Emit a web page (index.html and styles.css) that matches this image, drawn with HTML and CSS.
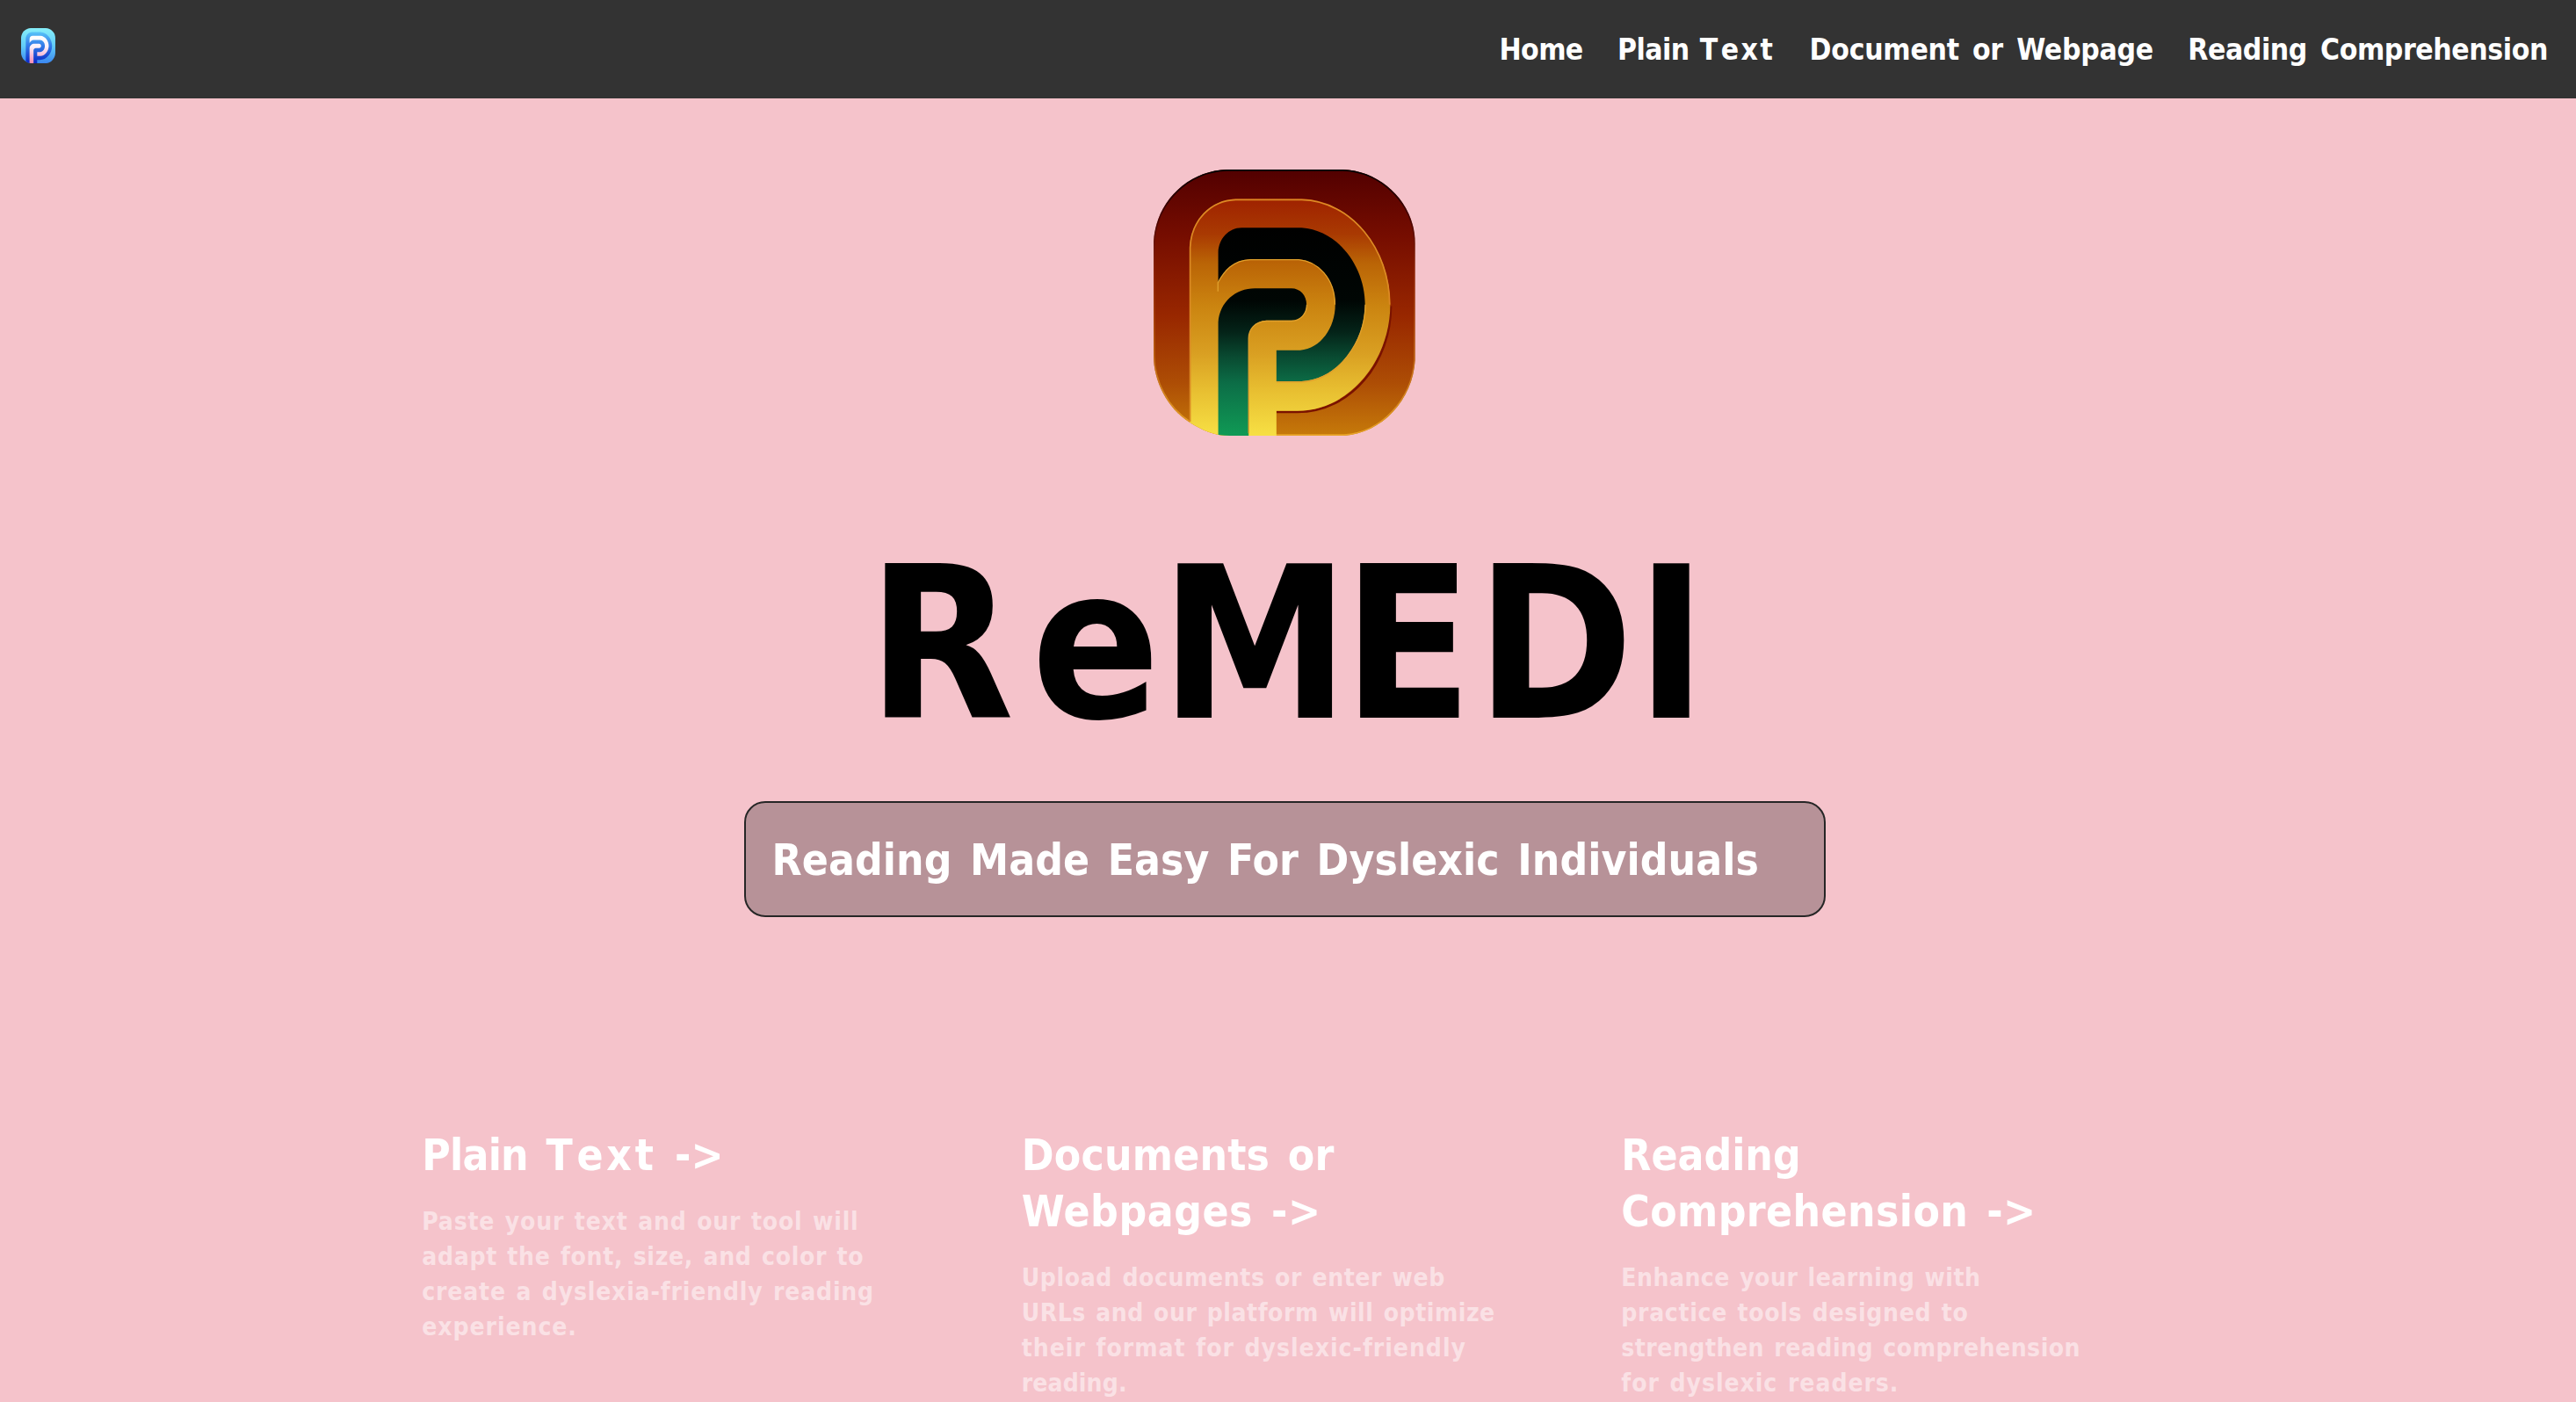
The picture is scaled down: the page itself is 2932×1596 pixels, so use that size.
FILE: index.html
```html
<!DOCTYPE html>
<html lang="en">
<head>
<meta charset="utf-8">
<title>ReMEDI</title>
<link rel="stylesheet" href="styles.css">
</head>
<body>
<header class="navbar">
  <svg class="brand" viewBox="69 68 895 910" preserveAspectRatio="none" aria-label="ReMEDI">
    <defs>
      <linearGradient id="sBase" gradientUnits="userSpaceOnUse" x1="0" y1="68" x2="0" y2="978"><stop offset="0" stop-color="#86eefa"/><stop offset=".5" stop-color="#62cdf8"/><stop offset="1" stop-color="#3a86f0"/></linearGradient>
      <linearGradient id="sBand" gradientUnits="userSpaceOnUse" x1="0" y1="168" x2="0" y2="978"><stop offset="0" stop-color="#58c4f8"/><stop offset=".4" stop-color="#3580ea"/><stop offset="1" stop-color="#0a28c4"/></linearGradient>
      <linearGradient id="sCore" gradientUnits="userSpaceOnUse" x1="0" y1="267" x2="0" y2="978"><stop offset="0" stop-color="#fff"/><stop offset=".4" stop-color="#fbf0fa"/><stop offset="1" stop-color="#f58cb4"/></linearGradient>
    </defs>
    <use href="#tile" fill="url(#sBase)"/>
    <g clip-path="url(#tileClip)"><use href="#band" fill="url(#sBand)"/></g>
    <g fill="url(#sCore)"><use href="#bowl"/><use href="#stem" clip-path="url(#tileClip)"/></g>
  </svg>
  <nav class="links">
    <a>Home</a><a><span class="word-plain">Plain</span> <span class="word-text"><span class="cap-t">T</span>ext</span></a><a>Document or Webpage</a><a>Reading Comprehension</a>
  </nav>
</header>
<main class="page">
  <svg class="logo" viewBox="69 68 895 910" preserveAspectRatio="none" aria-hidden="true">
    <defs>
      <path id="tile" d="M320 68H715C850 72 963 185 963 320V720C955 855 850 970 720 978H330C275 978 235 958 192 932C115 885 69 790 69 705V315C76 180 185 72 320 68Z"/>
      <path id="band" d="M192 978V335C196 240 265 172 350 168H575C745 172 878 340 878 530S740 893 560 893H489V978Z"/>
      <path id="bowl" d="M290 455V350C292 305 325 267 370 267H575C700 275 792 400 792 530C790 660 700 785 575 792H489V686H570C640 680 690 610 690 530C690 440 630 380 565 375H400C340 377 310 415 290 455Z"/>
      <path id="stem" d="M290 978V590C295 520 350 474 415 474H540C570 474 592 498 592 530S570 584 540 584H455C415 586 394 615 394 645V978Z"/>
      <clipPath id="tileClip"><use href="#tile"/></clipPath>
      <linearGradient id="base" gradientUnits="userSpaceOnUse" x1="0" y1="68" x2="0" y2="978"><stop offset="0" stop-color="#520000"/><stop offset=".25" stop-color="#760d00"/><stop offset=".55" stop-color="#982700"/><stop offset=".8" stop-color="#ad4d05"/><stop offset="1" stop-color="#c67a0a"/></linearGradient>
      <linearGradient id="gold" gradientUnits="userSpaceOnUse" x1="0" y1="168" x2="0" y2="978"><stop offset="0" stop-color="#9f2200"/><stop offset=".15" stop-color="#a93a02"/><stop offset=".27" stop-color="#ba6406"/><stop offset=".45" stop-color="#cb8410"/><stop offset=".65" stop-color="#d99f22"/><stop offset=".8" stop-color="#e7bd30"/><stop offset="1" stop-color="#f7e044"/></linearGradient>
      <linearGradient id="green" gradientUnits="userSpaceOnUse" x1="0" y1="267" x2="0" y2="978"><stop offset="0" stop-color="#000"/><stop offset=".35" stop-color="#000604"/><stop offset=".5" stop-color="#042318"/><stop offset=".62" stop-color="#094a31"/><stop offset=".75" stop-color="#0c6e47"/><stop offset="1" stop-color="#109a55"/></linearGradient>
      <linearGradient id="rim" gradientUnits="userSpaceOnUse" x1="0" y1="68" x2="0" y2="978"><stop offset="0" stop-color="#000"/><stop offset=".2" stop-color="#300" stop-opacity=".6"/><stop offset=".4" stop-color="#a04010" stop-opacity=".3"/><stop offset=".75" stop-color="#d08020" stop-opacity=".7"/><stop offset="1" stop-color="#e8a428"/></linearGradient>
    </defs>
    <use href="#tile" fill="url(#base)"/>
    <g clip-path="url(#tileClip)">
      <use href="#tile" fill="none" stroke="url(#rim)" stroke-width="10"/>
      <path d="M880 535C880 725 745 897 560 897H489" fill="none" stroke="#7a1200" stroke-width="8"/>
      <use href="#band" fill="url(#gold)"/>
      <path d="M194 930V335C198 240 265 174 350 171H575C745 175 876 340 876 530" fill="none" stroke="#dc8a24" stroke-width="5"/>
      <use href="#stem" fill="url(#green)"/>
    </g>
    <use href="#bowl" fill="url(#green)"/>
    <path d="M289 485V455C310 415 340 378 400 376H565C630 381 689 440 689 530M394 970V645C394 615 415 588 455 586H540C570 586 593 562 593 530M489 794H575C700 787 791 660 793 530" fill="none" stroke="#e0a02c" stroke-width="4"/>
  </svg>
  <h1 class="title"><span class="cap-r">R</span><span class="low-e">e</span><span class="cap-m">M</span><span class="cap-e">E</span><span class="cap-d">D</span><span>I</span></h1>
  <p class="tagline">Reading Made Easy For Dyslexic Individuals</p>
  <section class="cards">
    <article class="card plain">
      <h2><span class="word-plain">Plain</span> <span class="word-text"><span class="cap-t">T</span>ext</span> -&gt;</h2>
      <p><span class="line">Paste your text and our tool will</span> <span class="line">adapt the font, size, and color to</span> <span class="line">create a dyslexia-friendly reading</span> <span class="line">experience.</span></p>
    </article>
    <article class="card documents">
      <h2><span class="line">Documents or</span> <span class="line">Webpages -&gt;</span></h2>
      <p><span class="line">Upload documents or enter web</span> <span class="line">URLs and our platform will optimize</span> <span class="line">their format for dyslexic-friendly</span> <span class="line">reading.</span></p>
    </article>
    <article class="card reading">
      <h2><span class="line">Reading</span> <span class="line">Comprehension -&gt;</span></h2>
      <p><span class="line">Enhance your learning with</span> <span class="line">practice tools designed to</span> <span class="line">strengthen reading comprehension</span> <span class="line">for dyslexic readers.</span></p>
    </article>
  </section>
</main>
</body>
</html>
```
FILE: styles.css
```css
* { box-sizing: border-box; margin: 0; padding: 0; }

body {
  height: 1596px;
  overflow: hidden;
  background: #f5c3cb;
  color: #fff;
  font-family: "DejaVu Sans Condensed", "DejaVu Sans", sans-serif;
  font-weight: 700;
}

.navbar {
  display: flex;
  justify-content: space-between;
  align-items: center;
  height: 112px;
  padding: 0 32px 0 24px;
  background: #333;
}
.brand { width: 39px; height: 40px; margin-bottom: 8px; }
.links {
  display: flex;
  gap: 39.3px;
  font-size: 33.4px;
  letter-spacing: -0.39px;
  word-spacing: 5px;
  white-space: nowrap;
}
.links a:nth-child(1) { letter-spacing: -0.57px; }
.links a:nth-child(2) { word-spacing: 2px; }
.links a:nth-child(3) { letter-spacing: -0.25px; }

.word-plain { letter-spacing: -0.015em; }
.word-text { letter-spacing: 0.075em; }
.cap-t { letter-spacing: 0.1em; }

.page {
  display: flex;
  flex-direction: column;
  align-items: center;
  width: 2924px;
  padding-top: 81px;
}
.logo { width: 298px; height: 303px; }

.title {
  display: flex;
  margin: 118px 0 0 6px;
  color: #000;
  font-size: 240.7px;
  line-height: 240px;
}
.cap-r { letter-spacing: 19.5px; }
.low-e { letter-spacing: 0; }
.cap-m { letter-spacing: -8px; }
.cap-e { letter-spacing: 3.6px; }
.cap-d { letter-spacing: 2.5px; }

.tagline {
  width: 1231px;
  height: 132px;
  margin-top: 58px;
  padding-left: 30px;
  border: 2px solid #262626;
  border-radius: 24px;
  background: rgba(0, 0, 0, 0.25);
  font-size: 49.3px;
  line-height: 130px;
  letter-spacing: 0.08px;
  word-spacing: 5px;
  white-space: nowrap;
}

.cards {
  display: grid;
  grid-template-columns: repeat(3, 682.5px);
  margin: 239px 0 0 2px;
}
.card { padding: 0 41px; white-space: nowrap; }
.line { display: block; }
.card h2 {
  margin-bottom: 24px;
  font-size: 49.3px;
  line-height: 64px;
  word-spacing: 5px;
}
.card p {
  color: rgba(255, 255, 255, 0.5);
  font-size: 28.1px;
  line-height: 40px;
  word-spacing: 2px;
}

/* Tracking of each text line */
.plain p .line:nth-child(1) { letter-spacing: 0.78px; }
.plain p .line:nth-child(2) { letter-spacing: 0.65px; }
.plain p .line:nth-child(3) { letter-spacing: 0.78px; }
.plain p .line:nth-child(4) { letter-spacing: 0.9px; }
.documents h2 .line:nth-child(1) { letter-spacing: 0.2px; }
.documents h2 .line:nth-child(2) { letter-spacing: 0.55px; }
.documents p .line:nth-child(1) { letter-spacing: 0.58px; }
.documents p .line:nth-child(2) { letter-spacing: 0.5px; }
.documents p .line:nth-child(3) { letter-spacing: 0.94px; }
.documents p .line:nth-child(4) { letter-spacing: 0.09px; }
.reading h2 .line:nth-child(2) { letter-spacing: 0.4px; }
.reading p .line:nth-child(1) { letter-spacing: 0.46px; }
.reading p .line:nth-child(2) { letter-spacing: 0.66px; }
.reading p .line:nth-child(3) { letter-spacing: 0.47px; }
.reading p .line:nth-child(4) { letter-spacing: 0.92px; }
```
